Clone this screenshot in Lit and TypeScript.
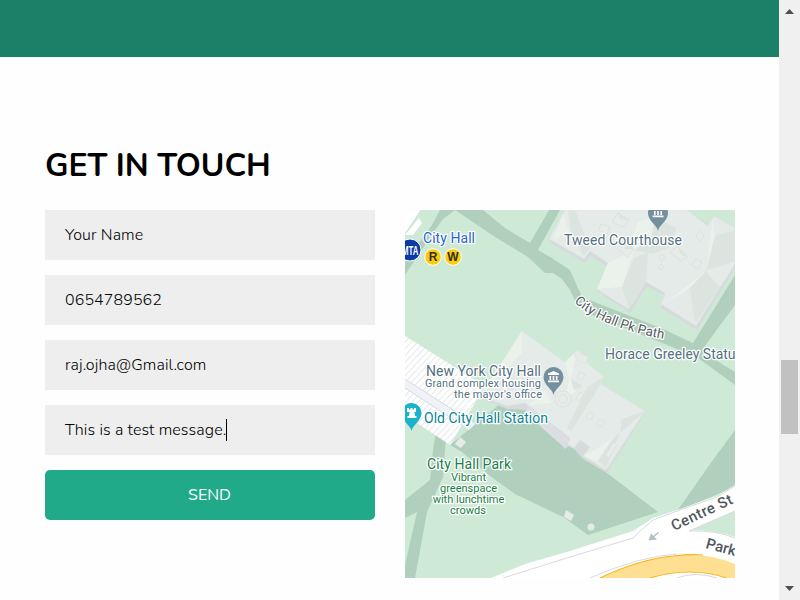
import { LitElement, html, svg, css } from "lit";
import { customElement } from "lit/decorators.js";

@customElement("city-map")
class CityMap extends LitElement {
  static styles = css`
    :host { display: block; width: 330px; height: 368px; overflow: hidden; }
    svg { display: block; }
    text { font-family: Roboto, sans-serif; font-size: 14px; paint-order: stroke; stroke: #fff; stroke-width: 2.5px; stroke-linejoin: round; fill: #54717f; }
    .grass { fill: #ceead6; }
    .path { fill: #b1cfbd; }
    .road { fill: #fff; }
    .kerb { fill: none; stroke: #d6dadf; stroke-width: 1; }
    .wall { fill: #d6dadd; }
    .roof { fill: #e5ebe8; stroke: #dde3e1; stroke-width: .7; }
    .lit { fill: #ebf2ec; }
    .shade { fill: #dce4e0; }
    .mid { fill: #e4eae7; }
    .vent { fill: #e7ece9; stroke: #d6dcda; stroke-width: .6; }
    .small { font-size: 11px; }
    .blue { fill: #2866d2; }
    .teal { fill: #078492; }
    .green { fill: #188044; }
    .street { fill: #505960; }
    .walk { font-size: 13.3px; }
    .big { font-size: 15px; font-weight: 500; }
    .line { font-family: "Liberation Sans", sans-serif; font-size: 12px; font-weight: bold; fill: #332f24; stroke: none; }
    .mta { font-family: "Liberation Sans", sans-serif; font-size: 13px; font-weight: bold; fill: #fff; stroke: none; }
  `;

  pin(x: number, y: number, color: string) {
    return svg`<path d="M${x} ${y + 18}C${x - 1} ${y + 12} ${x - 10} ${y + 8} ${x - 10} ${y}A10 10 0 0 1 ${x + 10} ${y}C${x + 10} ${y + 8} ${x + 1} ${y + 12} ${x} ${y + 18}Z" fill=${color}/>`;
  }

  museum(x: number, y: number) {
    return svg`<path d="M${x - 5.5} ${y - 2}V${y - 3.5}L${x} ${y - 6}L${x + 5.5} ${y - 3.5}V${y - 2}ZM${x - 4} ${y - 1}h1.6v4h-1.6zM${x - 0.8} ${y - 1}h1.6v4h-1.6zM${x + 2.4} ${y - 1}h1.6v4h-1.6zM${x - 5.5} ${y + 3.6}h11v1.6h-11z" fill="#fff"/>`;
  }

  render() {
    return html`<svg width="330" height="368" viewBox="405 210 330 368">
      <defs>
        <pattern id="hatch" width="4.6" height="4.6" patternUnits="userSpaceOnUse" patternTransform="rotate(-47)">
          <rect width="4.6" height="4.6" fill="#fff"/><path d="M0 .5H4.6" stroke="#e3e5e9" stroke-width=".9"/>
        </pattern>
        <path id="pk" d="M574 302Q602 328 665 339"/>
      </defs>
      <rect class="grass" x="405" y="210" width="330" height="368"/>
      <path class="path" d="M440 210H455L443 219L435 230L405 275V262L432 225ZM455 210H483L505 228L530 243L549 210H560L538 250L552 258L570 270L582 297L663 329L693 343L735 275V305L702 350L712 358L735 372V385L698 358L660 342L590 314L575 301L570 290L562 279L553 273H545L528 257L492 235Z"/>
      <path class="road" d="M405 210H421L405 234Z"/><path class="kerb" d="M421 210L405 234"/>
      <path class="road" d="M419 218L422 223L413 235H405Z"/>
      <path class="path" d="M437 425H447L443 477L427 512L415 578H405V565L417 512L405 518V500L430 480L433 450Z"/>
      <path class="path" d="M517 390L450 445L462 452L490 476L515 494L563 517L588 535L658 512L607 473L570 440ZM735 430L713 460L677 511L735 487Z"/>
      <path d="M405 336L485 386L450 445L405 415Z" fill="url(#hatch)"/>
      <path d="M405 379L475 424L469 430L405 388Z" fill="#f1f2f6"/><path class="kerb" d="M405 379L470 421M405 388L465 427"/>

      <path class="wall" d="M565 210L549 242L585 263L590 256L608 267L597 291L630 313L647 286L665 296L661 308L697 330L735 268V240L687 211Z"/>
      <path class="roof" d="M565 210L549 239L584 259L590 251L608 263L597 289L629 309L646 282L665 293L661 304L696 326L735 264V228L714 216L708 226L687 210Z"/>
      <path class="lit" d="M608 263L634 250L622 287L597 289ZM663 305L690 288L706 271ZM713 218L715 236L706 271ZM563 214L569 232L553 240Z"/>
      <path class="mid" d="M597 289L622 287L629 309ZM663 305L690 288L695 323ZM713 218L735 230L715 236Z"/>
      <path class="shade" d="M622 287L629 309L646 282L648 252L634 258ZM690 288L695 323L720 288L706 271ZM715 236L735 230V261L706 271ZM568 210H575L590 248L584 256L571 233Z"/>
      <path class="lit" d="M632 238L638 222L655 217L651 239L634 250Z"/>
      <path class="shade" d="M651 239L655 217L676 228L673 246L653 254L634 250Z"/>
      <path class="vent" d="M601 224L610 227L607 234L599 230ZM612 222L618 213L629 220L623 227ZM617 248L624 240L634 249L628 258ZM670 252L678 246L687 257L681 261ZM661 254L665 257L662 261L659 258ZM661 264L664 267L661 270L658 267ZM699 231L704 235L700 241L696 237ZM696 259L702 262L698 269L692 265Z"/>
      <path class="shade" d="M618 213L629 220L620 219ZM678 246L687 257L681 255ZM624 240L634 249L625 249Z"/>

      <path class="wall" d="M477 397L507 409L528 410L565 449L569 446L575 450L583 459L607 473L645 413L603 386L530 400L495 374Z"/>
      <path class="roof" d="M522 331L565 362L577 350L588 358L586 362L604 377L601 384L645 411L606 470L583 456L590 447L580 440L574 448L567 444L570 438L525 403L507 406L477 395L495 373Z"/>
      <path d="M528 405L570 440L565 448L525 413Z" fill="#dcdee2"/>
      <path class="lit" d="M522 331V353L480 394L495 373ZM577 351L570 382L565 362ZM545 390L552 403L529 405ZM585 456L607 442L615 435L597 462ZM570 379L579 387L571 395L566 390Z"/>
      <path class="shade" d="M604 377L601 384L571 431L567 428L588 386ZM645 411L622 419L620 433L606 468L598 461L612 440ZM571 379L574 390L583 386Z"/>
      <path class="roof" d="M577 350L588 358L586 362L582 363L574 356ZM604 377L571 431"/>
      <path class="vent" d="M590 412L594 415L591 420L586 417ZM600 419L605 422L601 427L596 424ZM580 392L584 395L579 401L576 398ZM580 372L585 375L581 380L577 377ZM614 442L617 445L609 458L605 455Z"/>
      <circle class="vent" cx="563" cy="399" r="8"/><circle class="vent" cx="563" cy="399" r="4.500"/>
      <path class="vent" d="M460 437L466 442L461 448L455 444ZM566 510L574 515L571 521L564 517Z"/><circle cx="591" cy="527" r="3.5" fill="#e3ebe7"/>

      <path class="road" d="M491 578L525 564L570 551L633 531L653 518L677 510L717 496L735 485V578Z"/>
      <path class="grass" d="M735 511L692 530Q716 530 735 537Z"/>
      <path class="kerb" d="M503 578L570 557L633 538Q643 528 653 520L677 511L717 497L735 486M735 511L689 531Q716 530 735 538"/>
      <path class="kerb" d="M590 578Q640 556 677 554"/>
      <path d="M600 578Q640 559 673 556Q707 552 735 564V578H727Q690 566 650 578Z" fill="#ffe092"/>
      <path d="M600 578Q640 559 673 556Q690 554 703 555M650 578Q690 566 727 578" fill="none" stroke="#f9b41c" stroke-width="1.2"/>
      <path class="kerb" d="M677 578Q695 571 717 578"/>
      <path d="M658.500 532.500L653 537" stroke="#b4bfc5" stroke-width="1.6"/><path d="M648.500 540.500L651 533.500L657 539.500Z" fill="#b4bfc5"/>

      ${this.pin(658, 213, "#748f9d")}${this.museum(658, 212)}
      ${this.pin(553.5, 377, "#748f9d")}${this.museum(553.5, 377)}
      ${this.pin(411.5, 413, "#19b3ca")}
      <path d="M407 408h2v1.5h1.5v-1.5h2v1.5h1.5v-1.5h2v4h-1.6l.7 4h1.4v2h-9v-2h1.4l.7-4H407z" fill="#fff"/>
      <circle cx="410" cy="250" r="11" fill="#0b3aa6" stroke="#fff"/>
      <text class="mta" x="402" y="254.500" textLength="16.500" lengthAdjust="spacingAndGlyphs">MTA</text>
      <circle cx="433" cy="257" r="8.3" fill="#fccb0a" stroke="#fff"/><circle cx="453" cy="257" r="8.3" fill="#fccb0a" stroke="#fff"/>
      <text class="line" x="428.800" y="261.300">R</text><text class="line" x="447.300" y="261.300">W</text>
      <text class="blue" x="423" y="243" textLength="52">City Hall</text>
      <text x="564" y="245" textLength="118">Tweed Courthouse</text>
      <text x="605" y="359" textLength="138">Horace Greeley Statue</text>
      <text x="426" y="376" textLength="115">New York City Hall</text>
      <text class="small" x="425" y="387" textLength="116">Grand complex housing</text>
      <text class="small" x="454" y="398" textLength="88">the mayor's office</text>
      <text class="teal" x="424" y="423" textLength="124">Old City Hall Station</text>
      <text class="green" x="427" y="469" textLength="84">City Hall Park</text>
      <text class="green small" x="468.500" y="481" text-anchor="middle">Vibrant</text>
      <text class="green small" x="468.500" y="492" text-anchor="middle">greenspace</text>
      <text class="green small" x="468.500" y="503" text-anchor="middle">with lunchtime</text>
      <text class="green small" x="468" y="514" text-anchor="middle">crowds</text>
      <text class="street walk"><textPath href="#pk">City Hall Pk Path</textPath></text>
      <text class="street big" transform="translate(674 531) rotate(-25)" textLength="66">Centre St</text>
      <text class="street big" transform="translate(705 548) rotate(15)">Park Row</text>
    </svg>`;
  }
}

@customElement("app-root")
class AppRoot extends LitElement {
  static styles = css`
    :host { display: flex; width: 800px; height: 600px; overflow: hidden; background: #fefefe; font-family: Nunito, Lato, sans-serif; color: #000; }
    * { box-sizing: border-box; }
    .page { flex: 1; }
    .banner { height: 57px; background: #1b8067; }
    .contact { padding: 88px 44px 0 45px; }
    h2 { margin: 0; height: 65px; line-height: 42px; font-size: 32px; font-weight: 700; letter-spacing: -.05px; white-space: nowrap; }
    .columns { display: flex; gap: 30px; }
    form { width: 330px; display: flex; flex-direction: column; gap: 15px; }
    .field { height: 50px; padding: 0 20px; display: flex; align-items: center; background: #eee; font-size: 16px; font-weight: 300; letter-spacing: .1px; color: #000; }
    .caret { width: 1px; height: 22px; background: #000; }
    button { height: 50px; padding: 0 7px 0 6px; border: 0; border-radius: 5px; background: #20aa89; color: #fff; font: 16px Nunito, Lato, sans-serif; }
    .bar { width: 21px; background: #f0f0f0; display: flex; flex-direction: column; align-items: center; padding: 9px 0 9px; }
    .bar svg { display: block; }
    .thumb { width: 17px; height: 74px; margin: 346px 0 auto; background: #c1c1c1; }
  `;

  render() {
    return html`
      <main class="page">
        <div class="banner"></div>
        <section class="contact">
          <h2>GET IN TOUCH</h2>
          <div class="columns">
            <form>
              <div class="field">Your Name</div>
              <div class="field">0654789562</div>
              <div class="field">raj.ojha@Gmail.com</div>
              <div class="field">This is a test message.<i class="caret"></i></div>
              <button type="button">SEND</button>
            </form>
            <city-map></city-map>
          </div>
        </section>
      </main>
      <aside class="bar">
        <svg width="9" height="5"><path d="M0 5L4.500 0L9 5Z" fill="#505050"/></svg>
        <div class="thumb"></div>
        <svg width="9" height="5"><path d="M0 0H9L4.500 5Z" fill="#505050"/></svg>
      </aside>`;
  }
}
